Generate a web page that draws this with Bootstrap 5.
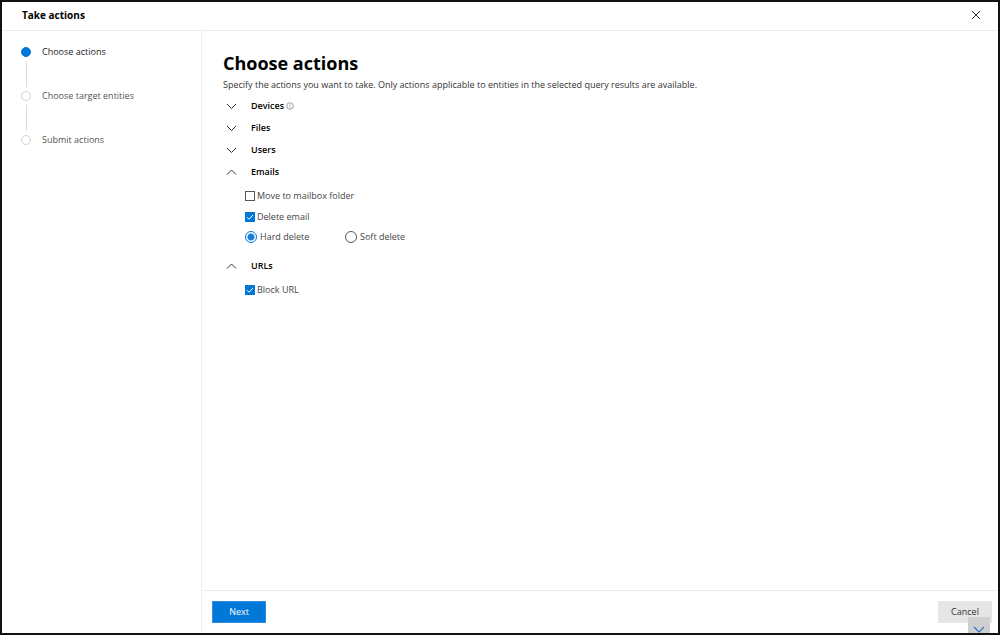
<!DOCTYPE html>
<html lang="en">
<head>
<meta charset="utf-8">
<meta name="viewport" content="width=device-width, initial-scale=1">
<title>Take actions</title>
<link href="https://cdn.jsdelivr.net/npm/bootstrap@5.3.0/dist/css/bootstrap.min.css" rel="stylesheet">
<style>
  body { font-family: "Open Sans", "Noto Sans", sans-serif; font-size: 9px; line-height: 14px; color: #333; background: #fff; }
  .panel-frame { border: 2px solid #111; }
  .panel-head { height: 29px; padding: 0 17px 2px 20px; border-bottom: 1px solid #ededed; }
  .panel-title { font-size: 10px; line-height: 14px; font-weight: 700; color: #000; }
  .icon-btn { border: 0; background: none; padding: 0; display: flex; color: #333; }
  .steps { width: 200px; border-right: 1px solid #ededed; padding: 14px 19px; }
  .step { height: 44px; gap: 11px; color: #555; }
  .step.active { color: #222; }
  .step a { color: inherit; text-decoration: none; }
  .step-rail { width: 10px; padding-top: 2px; gap: 4px; }
  .step-dot { width: 10px; height: 10px; border: 1px solid #d4d4d4; border-radius: 50%; flex: none; }
  .active .step-dot { background: #0078d7; border-color: #0078d7; }
  .step-line { width: 1px; height: 26px; background: #dcdcdc; }
  .content-area { padding: 20px 21px; }
  .page-title { font-size: 18px; line-height: 24px; font-weight: 700; color: #000; margin-bottom: 2px; }
  .intro { line-height: 16px; margin-bottom: 2px; }
  .group-row { height: 22px; color: #000; font-weight: 600; }
  .group-row .icon-btn { width: 28px; padding-left: 3px; }
  .info-icon { margin-left: 2px; }
  .options { padding: 2px 0 8px 22px; color: #444; }
  .option { height: 20px; gap: 2px; }
  .option.first { height: 22px; }
  .option input { appearance: none; margin: 0; width: 10px; height: 10px; border: 1px solid #555; background: #fff; flex: none; }
  .option input[type=checkbox]:checked { border-color: #0078d7; background: #0078d7 url("data:image/svg+xml,%3Csvg xmlns='http://www.w3.org/2000/svg' viewBox='0 0 8 8'%3E%3Cpath d='M1 4.2l2 2L7 2' fill='none' stroke='white'/%3E%3C/svg%3E") center/8px no-repeat; }
  .option input[type=radio] { width: 12px; height: 12px; border-radius: 50%; }
  .option input[type=radio]:checked { border-color: #0078d7; background: radial-gradient(circle, #1480dc 3px, #fff 4px); }
  .radio-pair { width: 98px; gap: 3px; }
  .panel-foot { border-top: 1px solid #ececec; padding: 10px 6px 10px 10px; }
  .foot-btn { width: 54px; height: 22px; padding: 0; border-radius: 0; font-size: 9px; line-height: 20px; }
  .foot-btn.btn-primary { background: #0078d7; border-color: #2b8ee0; }
  .foot-btn.btn-light { background: #e6e6e6; border-color: #e6e6e6; color: #333; }
  .scroll-down { position: absolute; right: 8px; bottom: 0; width: 22px; height: 16px; background: #cfcfcf; align-items: flex-end; justify-content: center; }
</style>
</head>
<body>
<div class="panel-frame d-flex flex-column min-vh-100 position-relative">
  <header class="panel-head d-flex align-items-center justify-content-between">
    <div class="panel-title">Take actions</div>
    <button class="icon-btn" type="button" aria-label="Close"><svg width="10" height="10" viewBox="0 0 10 10" fill="none" stroke="currentColor"><path d="M1 1l8 8M9 1L1 9"/></svg></button>
  </header>
  <div class="d-flex flex-grow-1">
    <nav class="steps flex-shrink-0" aria-label="Steps">
      <div class="step active d-flex"><div class="step-rail d-flex flex-column align-items-center"><span class="step-dot"></span><span class="step-line"></span></div><a href="#" aria-current="step">Choose actions</a></div>
      <div class="step d-flex"><div class="step-rail d-flex flex-column align-items-center"><span class="step-dot"></span><span class="step-line"></span></div><a href="#">Choose target entities</a></div>
      <div class="step d-flex"><div class="step-rail d-flex flex-column align-items-center"><span class="step-dot"></span></div><a href="#">Submit actions</a></div>
    </nav>
    <div class="d-flex flex-column flex-grow-1">
      <main class="content-area flex-grow-1">
        <h1 class="page-title">Choose actions</h1>
        <p class="intro">Specify the actions you want to take. Only actions applicable to entities in the selected query results are available.</p>
        <div class="group-row d-flex align-items-center"><button class="icon-btn" type="button" aria-label="Expand Devices"><svg width="11" height="7" viewBox="0 0 11 7" fill="none" stroke="currentColor"><path d="M1 1l4.500 4.500L10 1"/></svg></button><span>Devices</span><svg class="info-icon" width="8" height="8" viewBox="0 0 8 8" fill="none" stroke="#777" stroke-width=".7"><circle cx="4" cy="4" r="3.300"/><path d="M4 3.500v2.200M4 2v.8"/></svg></div>
        <div class="group-row d-flex align-items-center"><button class="icon-btn" type="button" aria-label="Expand Files"><svg width="11" height="7" viewBox="0 0 11 7" fill="none" stroke="currentColor"><path d="M1 1l4.500 4.500L10 1"/></svg></button><span>Files</span></div>
        <div class="group-row d-flex align-items-center"><button class="icon-btn" type="button" aria-label="Expand Users"><svg width="11" height="7" viewBox="0 0 11 7" fill="none" stroke="currentColor"><path d="M1 1l4.500 4.500L10 1"/></svg></button><span>Users</span></div>
        <div class="group-row d-flex align-items-center"><button class="icon-btn" type="button" aria-label="Collapse Emails"><svg width="11" height="7" viewBox="0 0 11 7" fill="none" stroke="currentColor"><path d="M1 5.500L5.500 1L10 5.500"/></svg></button><span>Emails</span></div>
        <div class="options">
          <div class="option first d-flex align-items-center"><input type="checkbox" id="move"><label for="move">Move to mailbox folder</label></div>
          <div class="option d-flex align-items-center"><input type="checkbox" id="del" checked><label for="del">Delete email</label></div>
          <div class="option d-flex">
            <div class="radio-pair d-flex align-items-center"><input type="radio" name="kind" id="hard" checked><label for="hard">Hard delete</label></div>
            <div class="radio-pair d-flex align-items-center"><input type="radio" name="kind" id="soft"><label for="soft">Soft delete</label></div>
          </div>
        </div>
        <div class="group-row d-flex align-items-center"><button class="icon-btn" type="button" aria-label="Collapse URLs"><svg width="11" height="7" viewBox="0 0 11 7" fill="none" stroke="currentColor"><path d="M1 5.500L5.500 1L10 5.500"/></svg></button><span>URLs</span></div>
        <div class="options">
          <div class="option first d-flex align-items-center"><input type="checkbox" id="block" checked><label for="block">Block URL</label></div>
        </div>
      </main>
      <footer class="panel-foot d-flex justify-content-between">
        <button type="button" class="btn btn-primary foot-btn">Next</button>
        <button type="button" class="btn btn-light foot-btn">Cancel</button>
      </footer>
    </div>
  </div>
  <button class="icon-btn scroll-down" type="button" aria-label="Scroll down"><svg width="12" height="7" viewBox="0 0 12 7" fill="none" stroke="#2f6fd0" stroke-width="1.200"><path d="M1 1l5 5l5-5"/></svg></button>
</div>
<script src="https://cdn.jsdelivr.net/npm/bootstrap@5.3.0/dist/js/bootstrap.bundle.min.js"></script>
</body>
</html>
